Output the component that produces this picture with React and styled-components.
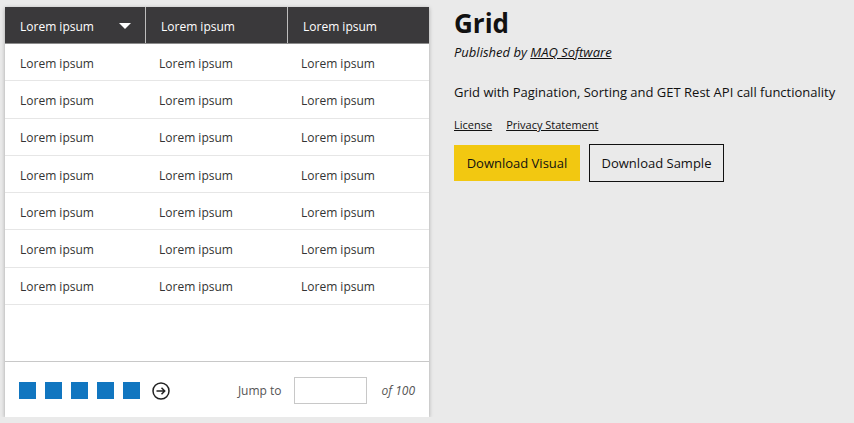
import styled, { createGlobalStyle } from 'styled-components';

const GlobalStyle = createGlobalStyle`
  html, body {
    margin: 0;
    padding: 0;
    background: #eaeaea;
    font-family: "Open Sans", "Noto Sans", sans-serif;
  }
`;

const rows = Array.from({ length: 7 });
const cols = ['Lorem ipsum', 'Lorem ipsum', 'Lorem ipsum'];

export default function App() {
  return (
    <>
      <GlobalStyle />
      <SPage>
        <SCard>
          <SHead>
            {cols.map((c, i) => (
              <SHeadCell key={i} $last={i === 2}>
                {c}
                {i === 0 && <SCaret />}
              </SHeadCell>
            ))}
          </SHead>
          <SBody>
            {rows.map((_, r) => (
              <SRow key={r}>
                {cols.map((c, i) => (
                  <SCell key={i}>{c}</SCell>
                ))}
              </SRow>
            ))}
          </SBody>
          <SFooter>
            <SPages>
              {[1, 2, 3, 4, 5].map((p) => (
                <SPageBox key={p} />
              ))}
              <SNext width="18" height="18" viewBox="0 0 18 18">
                <circle cx="9" cy="9" r="8" fill="none" stroke="#222" strokeWidth="1.5" />
                <path d="M4.5 9h8M9.5 5.8L12.7 9l-3.2 3.2" fill="none" stroke="#222" strokeWidth="1.5" />
              </SNext>
            </SPages>
            <SJump>
              <SJumpLabel>Jump to</SJumpLabel>
              <SInput />
              <SOf>of 100</SOf>
            </SJump>
          </SFooter>
        </SCard>
        <SInfo>
          <STitle>Grid</STitle>
          <SPublisher>
            Published by <a href="#">MAQ Software</a>
          </SPublisher>
          <SDesc>Grid with Pagination, Sorting and GET Rest API call functionality</SDesc>
          <SLinks>
            <a href="#">License</a>
            <a href="#">Privacy Statement</a>
          </SLinks>
          <SButtons>
            <SButton $primary>Download Visual</SButton>
            <SButton>Download Sample</SButton>
          </SButtons>
        </SInfo>
      </SPage>
    </>
  );
}

const SPage = styled.div`
  display: flex;
  align-items: flex-start;
  padding: 7px 0 0 5px;
  gap: 25px;
`;

const SCard = styled.div`
  width: 424px;
  height: 410px;
  background: #fff;
  box-shadow: 0 1px 4px rgba(0, 0, 0, 0.3);
  display: flex;
  flex-direction: column;
`;

const SHead = styled.div`
  display: grid;
  grid-template-columns: 141px 142px 1fr;
  height: 37px;
  box-sizing: border-box;
  background: #3a393b;
  border-bottom: 1px solid #8c8c8c;
`;

const SHeadCell = styled.div`
  display: flex;
  align-items: center;
  justify-content: space-between;
  padding: 3px 14px 0 15px;
  color: #fff;
  font-size: 12px;
  border-right: ${(p) => (p.$last ? 'none' : '1px solid #bdbdbd')};
`;

const SCaret = styled.span`
  width: 0;
  height: 0;
  border-left: 6px solid transparent;
  border-right: 6px solid transparent;
  border-top: 6px solid #fff;
  margin-top: -2px;
`;

const SBody = styled.div`
  flex: 1;
`;

const SRow = styled.div`
  display: grid;
  grid-template-columns: 139px 142px 1fr;
  height: 37.3px;
  align-items: center;
  border-bottom: 1px solid #e6e6e6;
  box-sizing: border-box;
  padding: 2px 0 0 15px;
`;

const SCell = styled.div`
  font-size: 12px;
  color: #333;
`;

const SFooter = styled.div`
  height: 56px;
  box-sizing: border-box;
  border-top: 1px solid #c8c8c8;
  display: flex;
  align-items: center;
  justify-content: space-between;
  padding: 2px 14px 0 14px;
`;

const SPages = styled.div`
  display: flex;
  align-items: center;
  gap: 9px;
`;

const SPageBox = styled.div`
  width: 17px;
  height: 17px;
  background: #1176c0;
`;

const SNext = styled.svg`
  margin-left: 3px;
`;

const SJump = styled.div`
  display: flex;
  align-items: center;
`;

const SJumpLabel = styled.span`
  font-size: 12px;
  color: #555;
  margin-right: 12px;
`;

const SInput = styled.div`
  width: 73px;
  height: 27px;
  border: 1px solid #c8c8c8;
  box-sizing: border-box;
`;

const SOf = styled.span`
  font-size: 12px;
  font-style: italic;
  color: #555;
  margin-left: 15px;
`;

const SInfo = styled.div`
  display: flex;
  flex-direction: column;
  color: #111;
  a {
    color: #111;
  }
`;

const STitle = styled.h1`
  margin: 0;
  font-size: 26px;
  font-weight: 700;
  line-height: 32px;
`;

const SPublisher = styled.div`
  font-size: 13px;
  font-style: italic;
  margin-top: 4px;
`;

const SDesc = styled.div`
  font-size: 13px;
  margin-top: 22px;
`;

const SLinks = styled.div`
  display: flex;
  gap: 14px;
  font-size: 11px;
  margin-top: 16px;
`;

const SButtons = styled.div`
  display: flex;
  align-items: center;
  gap: 9px;
  margin-top: 12px;
`;

const SButton = styled.button`
  font-family: inherit;
  font-size: 13px;
  color: #111;
  width: ${(p) => (p.$primary ? '126px' : '135px')};
  height: ${(p) => (p.$primary ? '36px' : '38px')};
  padding: 0;
  background: ${(p) => (p.$primary ? '#f2c811' : 'transparent')};
  border: ${(p) => (p.$primary ? 'none' : '1px solid #111')};
  cursor: pointer;
`;
